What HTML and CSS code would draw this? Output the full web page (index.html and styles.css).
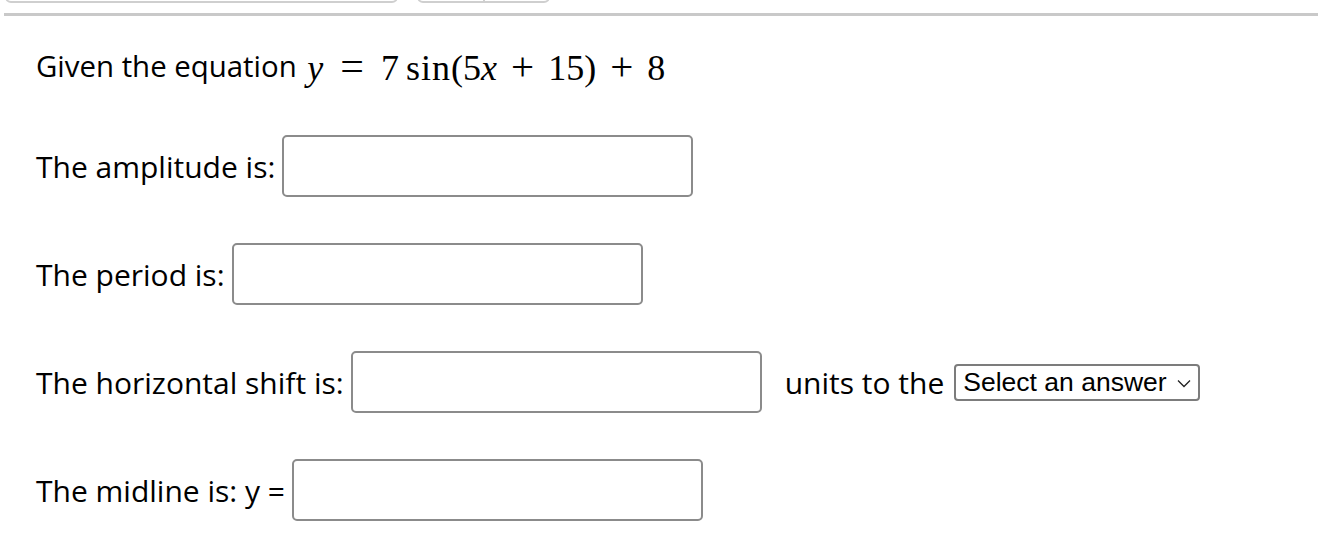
FILE: index.html
```html
<!DOCTYPE html>
<html lang="en">
<head>
<meta charset="utf-8">
<title>Sinusoid question</title>
<link rel="stylesheet" href="styles.css">
</head>
<body>
<div class="toolbar">
  <div class="tb-box tb-wide"></div>
  <div class="tb-box tb-split"><span class="tb-half"></span><span class="tb-half"></span></div>
</div>
<hr class="rule">
<main class="question">
  <p class="row eq-row">Given the equation <span class="math"><i class="mi">y</i><span class="rel">=</span><span class="mn">7</span><span class="fn">sin</span><span class="mo">(</span><span class="mn">5</span><i class="mi">x</i><span class="bin">+</span><span class="mn">15</span><span class="mo">)</span><span class="bin">+</span><span class="mn">8</span></span></p>
  <p class="row"><span class="label">The amplitude is:</span><input class="answer" type="text" aria-label="amplitude"></p>
  <p class="row"><span class="label">The period is:</span><input class="answer" type="text" aria-label="period"></p>
  <p class="row"><span class="label">The horizontal shift is:</span><input class="answer" type="text" aria-label="horizontal shift"><span class="after">units to the</span><span class="select-wrap"><select class="select" aria-label="direction"><option>Select an answer</option><option>Left</option><option>Right</option></select><svg class="chev" width="14" height="9" viewBox="0 0 14 9"><path d="M1 1.5 L7 7.5 L13 1.5" fill="none" stroke="#222" stroke-width="1.3"/></svg></span></p>
  <p class="row"><span class="label">The midline is: y =</span><input class="answer" type="text" aria-label="midline"></p>
</main>
</body>
</html>
```

FILE: styles.css
```css
html, body {
  margin: 0;
  padding: 0;
  background: #fff;
}
body {
  font-family: "Open Sans", "Noto Sans", sans-serif;
  color: #000;
  overflow: hidden;
}
.toolbar {
  display: flex;
  gap: 19px;
  margin-top: -30px;
  padding-left: 5px;
  height: 33px;
}
.tb-box {
  box-sizing: border-box;
  height: 33px;
  border: 2px solid #cfcfcf;
  border-radius: 6px;
}
.tb-wide { width: 393px; }
.tb-split {
  width: 133px;
  display: flex;
}
.tb-half { flex: 1; }
.tb-half + .tb-half { border-left: 2px solid #cfcfcf; }
.rule {
  margin: 10px 0 0 4px;
  border: 0;
  border-top: 3px solid #c9c9c9;
  height: 0;
}
.question {
  padding-left: 36px;
  display: flex;
  flex-direction: column;
  gap: 46px;
  padding-top: 29px;
}
.row {
  margin: 0;
  display: flex;
  align-items: center;
  font-size: 30px;
  height: 62px;
  white-space: pre;
}
.eq-row {
  height: 42px;
  margin-bottom: 2px;
  font-size: 29.4px;
}
.label { margin-right: 7px; }
.answer {
  box-sizing: border-box;
  width: 411px;
  height: 62px;
  border: 2px solid #8b8b8b;
  border-radius: 5px;
  background: #fff;
  font: inherit;
  padding: 0 10px;
  margin: 0;
}
.after { margin-left: 23px; margin-right: 10px; }
.select-wrap {
  position: relative;
  display: inline-flex;
}
.select {
  appearance: none;
  -webkit-appearance: none;
  box-sizing: border-box;
  width: 246px;
  height: 37px;
  border: 2px solid #7c7c7c;
  border-radius: 4px;
  background: #fff;
  font-family: "Liberation Sans", Arial, sans-serif;
  font-size: 26.5px;
  color: #000;
  padding: 0 0 0 7px;
  margin: 0;
}
.chev {
  position: absolute;
  right: 9px;
  top: 15px;
  pointer-events: none;
}
.math {
  font-family: "Liberation Serif", "Times New Roman", serif;
  font-size: 36px;
  margin-left: 3px;
}
.mi { font-style: italic; }
.rel { margin: 0 17px; font-size: 42px; }
.bin { margin: 0 14px; font-size: 41px; }
.fn { margin-left: 7px; letter-spacing: 1px; }
```
